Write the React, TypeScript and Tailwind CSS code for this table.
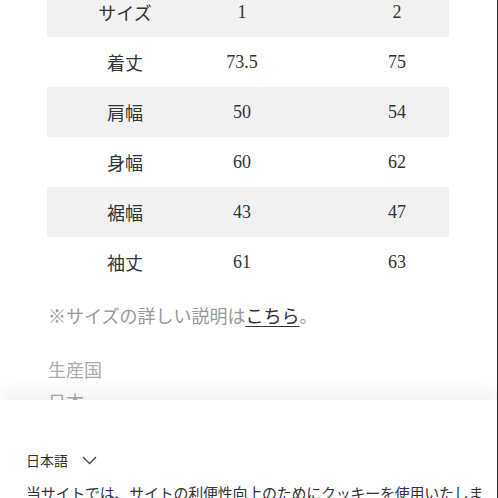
const rows = [
  { label: "サイズ", a: "1", b: "2" },
  { label: "着丈", a: "73.5", b: "75" },
  { label: "肩幅", a: "50", b: "54" },
  { label: "身幅", a: "60", b: "62" },
  { label: "裾幅", a: "43", b: "47" },
  { label: "袖丈", a: "61", b: "63" },
];

const sans = "font-['Noto_Sans_CJK_JP','Noto_Sans',sans-serif]";

function SizeTable() {
  return (
    <div className="ml-[47px] -mt-[13px] w-[402px]">
      {rows.map((r, i) => (
        <div
          key={r.label}
          className={`flex h-[50px] items-center text-[18px] text-[#333] ${
            i % 2 === 0 ? "bg-[#f2f2f2]" : "bg-white"
          }`}
        >
          <div className={`w-[156px] text-center ${sans}`}>{r.label}</div>
          <div className="w-[78px] text-center font-['Liberation_Serif',serif]">{r.a}</div>
          <div className="ml-auto w-[104px] text-center font-['Liberation_Serif',serif]">{r.b}</div>
        </div>
      ))}
    </div>
  );
}

function CookieBanner() {
  return (
    <div className="absolute bottom-0 left-0 h-[98px] w-full bg-white px-[26px] pt-[50px] shadow-[0_-10px_18px_rgba(0,0,0,0.05)]">
      <div className={`flex items-center gap-[14px] text-[14px] leading-[20px] text-[#333] ${sans}`}>
        <span>日本語</span>
        <svg width="15" height="9" viewBox="0 0 15 9" fill="none">
          <polyline points="1,1 7.5,7.5 14,1" stroke="#444" strokeWidth="1.3" />
        </svg>
      </div>
      <p className={`mt-[11px] whitespace-nowrap text-[15px] leading-[24px] tracking-[-0.25px] text-[#333] ${sans}`}>
        当サイトでは、サイトの利便性向上のためにクッキーを使用いたしま
      </p>
    </div>
  );
}

export default function App() {
  return (
    <div className="relative h-[498px] w-[498px] overflow-hidden border-r border-[#222] bg-white">
      <SizeTable />
      <p className={`ml-[48px] mt-[14px] text-[18px] leading-[28px] text-[#999] ${sans}`}>
        ※サイズの詳しい説明は
        <a className="text-[#333] underline underline-offset-[3px]">こちら</a>。
      </p>
      <div className={`ml-[48px] mt-[26px] text-[18px] leading-[28px] text-[#aaa] ${sans}`}>
        <p>生産国</p>
        <p className="mt-[4px]">日本</p>
      </div>
      <CookieBanner />
    </div>
  );
}
